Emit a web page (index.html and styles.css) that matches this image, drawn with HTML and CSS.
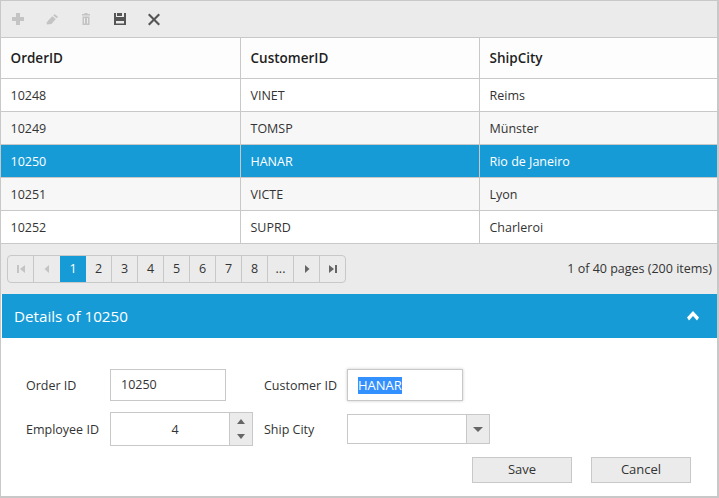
FILE: index.html
```html
<!DOCTYPE html>
<html lang="en">
<head>
    <meta charset="UTF-8">
    <title>Grid - Dialog Editing</title>
    <link rel="stylesheet" href="styles.css">
</head>
<body>
    <div class="grid">
        <div class="toolbar">
            <svg class="tool" viewBox="0 0 14 14"><path class="off" d="M5 1h4v4h4v4H9v4H5V9H1V5h4z"/></svg>
            <svg class="tool" viewBox="0 0 14 14"><path class="off" d="M9.500 2L13 4.800 11.800 6.300 8.300 3.400zM7.300 4.200l3.500 2.900-4.300 4.900L2 12.500 1.500 11l1.300-2z"/></svg>
            <svg class="tool" viewBox="0 0 14 14"><path class="off" d="M5.500 1h3v1H11v1.500H3V2h2.500zM3.500 4.500h7V13h-7zM5 6v5.500h1V6zM8 6v5.500h1V6z"/></svg>
            <svg class="tool" viewBox="0 0 14 14"><path class="on" d="M1 1h2v4h8V1h2v12H1zM4 1h5v3H4zM3 9v2.500h8V9z"/></svg>
            <svg class="tool" viewBox="0 0 14 14"><path class="on" d="M2.500 1.500L7 6 11.500 1.500 13 3 8.500 7.500l4.500 4.500-1.500 1.500L7 9 2.500 13.500 1 12l4.500-4.500L1 3z"/></svg>
        </div>
        <table class="data">
            <thead>
                <tr><th>OrderID</th><th>CustomerID</th><th>ShipCity</th></tr>
            </thead>
            <tbody>
                <tr><td>10248</td><td>VINET</td><td>Reims</td></tr>
                <tr class="alt"><td>10249</td><td>TOMSP</td><td>Münster</td></tr>
                <tr class="selected"><td>10250</td><td>HANAR</td><td>Rio de Janeiro</td></tr>
                <tr class="alt"><td>10251</td><td>VICTE</td><td>Lyon</td></tr>
                <tr><td>10252</td><td>SUPRD</td><td>Charleroi</td></tr>
            </tbody>
        </table>
        <div class="pager">
            <div class="pages">
                <span class="page off"><svg viewBox="0 0 10 10"><path d="M1 1h2v8H1zM9 1v8L4 5z"/></svg></span>
                <span class="page off prev"><svg viewBox="0 0 10 10"><path d="M7 1v8L2.500 5z"/></svg></span>
                <span class="page active">1</span>
                <span class="page">2</span>
                <span class="page">3</span>
                <span class="page">4</span>
                <span class="page">5</span>
                <span class="page">6</span>
                <span class="page">7</span>
                <span class="page">8</span>
                <span class="page">...</span>
                <span class="page"><svg viewBox="0 0 10 10"><path d="M3 1v8l4.500-4z"/></svg></span>
                <span class="page"><svg viewBox="0 0 10 10"><path d="M1 1v8l5-4zM7 1h2v8H7z"/></svg></span>
            </div>
            <div class="count">1 of 40 pages (200 items)</div>
        </div>
        <div class="dialog">
            <div class="dialog-title">
                <span>Details of 10250</span>
                <svg class="collapse" viewBox="0 0 12 10"><path d="M6 0l6 6.500L10 9.500 6 5 2 9.500 0 6.500z"/></svg>
            </div>
            <div class="form">
                <div class="fields">
                    <label>Order ID</label>
                    <div class="input">10250</div>
                    <label class="second">Customer ID</label>
                    <div class="input focused"><span class="picked">HANAR</span></div>
                    <label>Employee ID</label>
                    <div class="numeric">
                        <div class="num-value">4</div>
                        <div class="spin">
                            <svg viewBox="0 0 8 5"><path d="M4 0l4 5H0z"/></svg>
                            <svg viewBox="0 0 8 5"><path d="M0 0h8L4 5z"/></svg>
                        </div>
                    </div>
                    <label class="second">Ship City</label>
                    <div class="dropdown">
                        <div class="drop-value"></div>
                        <div class="drop-btn"><svg viewBox="0 0 10 5"><path d="M0 0h10L5 5z"/></svg></div>
                    </div>
                </div>
                <div class="actions">
                    <button type="button">Save</button>
                    <button type="button">Cancel</button>
                </div>
            </div>
        </div>
    </div>
</body>
</html>
```

FILE: styles.css
```css
body {
    margin: 0;
    font-family: "Open Sans", "Noto Sans", sans-serif;
    font-size: 12.5px;
    color: #333;
    background-color: #fff;
}
.grid {
    width: 716px;
    height: 495px;
    border: 1px solid #c8c8c8;
    border-right-width: 2px;
    border-bottom-width: 2px;
    display: flex;
    flex-direction: column;
}
.toolbar {
    height: 36px;
    flex: none;
    background-color: #ebebeb;
    border-bottom: 1px solid #c8c8c8;
    display: flex;
    align-items: center;
    gap: 20px;
    padding-left: 10px;
}
.tool {
    width: 14px;
    height: 14px;
}
.off {
    fill: #c4c4c4;
}
.on {
    fill: #555;
}
.data {
    width: 100%;
    border-collapse: separate;
    border-spacing: 0;
    table-layout: fixed;
}
.data th,
.data td {
    text-align: left;
    padding: 0 0 0 9.500px;
    border-bottom: 1px solid #c8c8c8;
    border-left: 1px solid #c8c8c8;
    box-sizing: border-box;
}
.data th:first-child,
.data td:first-child {
    border-left: none;
    width: 239px;
}
.data th:nth-child(2) {
    width: 239px;
}
.data th {
    height: 41px;
    font-size: 13.500px;
    font-weight: 600;
    color: #1f1f1f;
    background-color: #fdfdfd;
}
.data td {
    height: 33px;
}
.alt td {
    background-color: #f7f7f7;
}
.selected td {
    background-color: #179bd7;
    color: #fff;
}
.pager {
    height: 50px;
    flex: none;
    background-color: #ebebeb;
    display: flex;
    align-items: center;
    justify-content: space-between;
    padding: 0 5px 1px 6px;
    box-sizing: border-box;
}
.pages {
    display: flex;
    border: 1px solid #c8c8c8;
    border-radius: 4px;
    height: 26px;
    overflow: hidden;
}
.page {
    width: 26px;
    display: flex;
    align-items: center;
    justify-content: center;
    border-right: 1px solid #c8c8c8;
    box-sizing: border-box;
}
.page:last-child {
    width: 25px;
    border-right: none;
}
.page svg {
    width: 10px;
    height: 10px;
    fill: #666;
}
.page.off svg {
    fill: #c4c4c4;
}
.page.prev {
    border-right: none;
}
.page.active {
    background-color: #179bd7;
    color: #fff;
    border-right: none;
}
.dialog {
    flex: 1;
    display: flex;
    flex-direction: column;
    margin-left: 1px;
}
.dialog-title {
    height: 44px;
    flex: none;
    background-color: #179bd7;
    color: #fff;
    font-size: 15.200px;
    display: flex;
    align-items: center;
    justify-content: space-between;
    padding: 0 18px 0 12px;
}
.collapse {
    width: 12px;
    height: 10px;
    fill: #fff;
}
.form {
    flex: 1;
    padding: 31px 0 0 24px;
}
.fields {
    display: grid;
    grid-template-columns: 84px 116px 121px 143px;
    grid-template-rows: 32px 34px;
    row-gap: 11px;
    align-items: center;
}
.fields label {
    white-space: nowrap;
}
.fields .second {
    padding-left: 38px;
}
.input {
    width: 116px;
    height: 32px;
    border: 1px solid #c8c8c8;
    box-sizing: border-box;
    padding-left: 10px;
    line-height: 30px;
}
.focused {
    box-shadow: 0 0 3px rgba(0, 0, 0, 0.2);
}
.picked {
    background-color: #3390ff;
    color: #fff;
    font-size: 13px;
    display: inline-block;
    line-height: 17px;
    vertical-align: middle;
    margin-top: -1px;
}
.numeric {
    width: 143px;
    height: 34px;
    border: 1px solid #c8c8c8;
    box-sizing: border-box;
    display: flex;
}
.num-value {
    flex: 1;
    text-align: center;
    line-height: 34px;
    padding-left: 10px;
}
.spin {
    width: 23px;
    flex: none;
    background-color: #ebebeb;
    border-left: 1px solid #c8c8c8;
    display: flex;
    flex-direction: column;
    align-items: center;
    justify-content: space-between;
    padding: 6px 0;
    box-sizing: border-box;
}
.spin svg {
    width: 8px;
    height: 5px;
    fill: #666;
}
.dropdown {
    width: 143px;
    height: 30px;
    border: 1px solid #c8c8c8;
    box-sizing: border-box;
    display: flex;
}
.drop-value {
    flex: 1;
}
.drop-btn {
    width: 23px;
    box-sizing: border-box;
    background-color: #ebebeb;
    border-left: 1px solid #c8c8c8;
    display: flex;
    align-items: center;
    justify-content: center;
}
.drop-btn svg {
    width: 10px;
    height: 5px;
    fill: #666;
}
.actions {
    display: flex;
    justify-content: flex-end;
    gap: 19px;
    padding-right: 26px;
    margin-top: 11px;
}
button {
    width: 100px;
    height: 26px;
    border: 1px solid #c8c8c8;
    background-color: #ebebeb;
    color: #333;
    font: inherit;
    font-size: 13px;
    padding: 0 0 2px;
}
```
